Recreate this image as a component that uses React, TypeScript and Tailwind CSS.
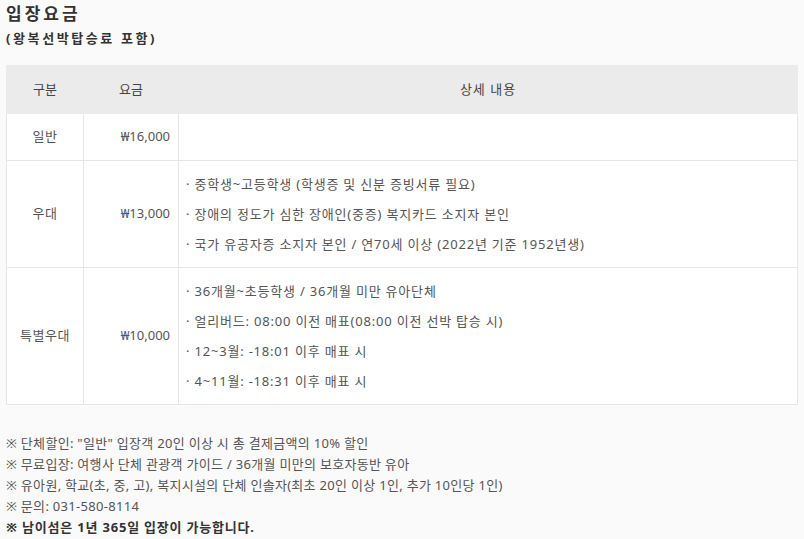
import React from 'react';

const ROWS = [
  { type: '일반', price: '₩16,000', details: [] as string[] },
  {
    type: '우대',
    price: '₩13,000',
    details: [
      '· 중학생~고등학생 (학생증 및 신분 증빙서류 필요)',
      '· 장애의 정도가 심한 장애인(중증) 복지카드 소지자 본인',
      '· 국가 유공자증 소지자 본인 / 연70세 이상 (2022년 기준 1952년생)',
    ],
  },
  {
    type: '특별우대',
    price: '₩10,000',
    details: [
      '· 36개월~초등학생 / 36개월 미만 유아단체',
      '· 얼리버드: 08:00 이전 매표(08:00 이전 선박 탑승 시)',
      '· 12~3월: -18:01 이후 매표 시',
      '· 4~11월: -18:31 이후 매표 시',
    ],
  },
];

const NOTES = [
  '※ 단체할인: "일반" 입장객 20인 이상 시 총 결제금액의 10% 할인',
  '※ 무료입장: 여행사 단체 관광객 가이드 / 36개월 미만의 보호자동반 유아',
  '※ 유아원, 학교(초, 중, 고), 복지시설의 단체 인솔자(최초 20인 이상 1인, 추가 10인당 1인)',
  '※ 문의: 031-580-8114',
];

export default function App() {
  return (
    <div
      className="w-[804px] h-[539px] overflow-hidden bg-[#fafafa] px-[6px] pt-[3px]"
      style={{ fontFamily: '"Noto Sans", "Noto Sans CJK KR", sans-serif' }}
    >
      {/* Title */}
      <h2 className="text-[17px] font-bold leading-[22px] tracking-[3px] text-[#333]">입장요금</h2>
      <p className="mt-[5px] text-[13px] font-bold leading-[17px] tracking-[2.6px] text-[#333]">
        (왕복선박탑승료 포함)
      </p>

      {/* Price table */}
      <table className="mt-[18px] w-[792px] border-collapse table-fixed text-[13px] text-[#555]">
        <colgroup>
          <col className="w-[77px]" />
          <col className="w-[95px]" />
          <col />
        </colgroup>
        <thead>
          <tr className="h-[48px] bg-[#ebebeb] text-[#444]">
            <th className="font-normal border border-[#ebebeb]">구분</th>
            <th className="font-normal border border-[#ebebeb]">요금</th>
            <th className="font-normal border border-[#ebebeb] tracking-[1px]">상세 내용</th>
          </tr>
        </thead>
        <tbody className="bg-white">
          {ROWS.map((row) => (
            <tr key={row.type}>
              <td className="border border-[#e6e6e6] text-center tracking-[0.5px]">{row.type}</td>
              <td className="border border-[#e6e6e6] text-right pr-[8px]">{row.price}</td>
              <td className="border border-[#e6e6e6] pl-[7px] py-[8px] tracking-[0.8px]">
                {row.details.length === 0 ? (
                  <div className="h-[30px]" />
                ) : (
                  row.details.map((d) => (
                    <div key={d} className="leading-[30px]">
                      {d}
                    </div>
                  ))
                )}
              </td>
            </tr>
          ))}
        </tbody>
      </table>

      {/* Notes */}
      <div className="mt-[28px] text-[13px] leading-[21px] text-[#555] tracking-[0.3px]">
        {NOTES.map((n) => (
          <p key={n}>{n}</p>
        ))}
        <p className="font-bold text-[#333] tracking-[0.8px]">※ 남이섬은 1년 365일 입장이 가능합니다.</p>
      </div>
    </div>
  );
}
